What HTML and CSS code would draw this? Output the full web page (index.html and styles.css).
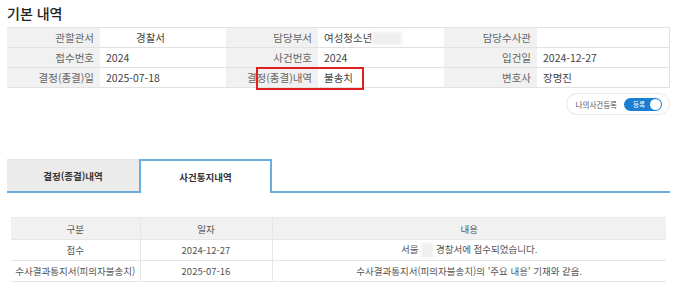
FILE: index.html
```html
<!DOCTYPE html>
<html lang="ko">
<head>
    <meta charset="UTF-8">
    <title>기본 내역</title>
    <link rel="stylesheet" href="styles.css">
</head>
<body>
    <div class="page">
        <h2 class="title">기본 내역</h2>
        <div class="infoWrap">
            <table class="info">
                <colgroup>
                    <col style="width:93px"><col style="width:126px">
                    <col style="width:92px"><col style="width:126px">
                    <col style="width:93px"><col>
                </colgroup>
                <tr>
                    <th>관할관서</th><td><span class="gap w36"></span>경찰서</td>
                    <th>담당부서</th><td>여성청소년<span class="blur w30"></span></td>
                    <th>담당수사관</th><td></td>
                </tr>
                <tr>
                    <th>접수번호</th><td>2024</td>
                    <th>사건번호</th><td>2024</td>
                    <th>입건일</th><td>2024-12-27</td>
                </tr>
                <tr>
                    <th>결정(종결)일</th><td>2025-07-18</td>
                    <th>결정(종결)내역</th><td>불송치</td>
                    <th>변호사</th><td>장명진</td>
                </tr>
            </table>
            <div class="redBox"></div>
        </div>
        <div class="toggleRow">
            <div class="togglePill">
                <span class="toggleLabel">나의사건등록</span>
                <span class="switch"><span class="switchText">등록</span><span class="knob"></span></span>
            </div>
        </div>
        <div class="tabs">
            <div class="tab">결정(종결)내역</div>
            <div class="tab active">사건통지내역</div>
            <div class="tabRest"></div>
        </div>
        <table class="notice">
            <colgroup>
                <col style="width:129px"><col style="width:132px"><col>
            </colgroup>
            <tr><th>구분</th><th>일자</th><th>내용</th></tr>
            <tr><td>접수</td><td>2024-12-27</td><td>서울 <span class="blur w12"></span> 경찰서에 접수되었습니다.</td></tr>
            <tr><td>수사결과통지서(피의자불송치)</td><td>2025-07-16</td><td>수사결과통지서(피의자불송치)의 '주요 내용' 기재와 같음.</td></tr>
        </table>
    </div>
</body>
</html>
```

FILE: styles.css
```css
body {
    margin: 0;
    background: #fff;
    color: #333;
    font-family: "Noto Sans CJK KR", "Noto Sans", sans-serif;
}
.page {
    padding: 0 6px 0 7px;
}
.title {
    margin: 0;
    padding-top: 4px;
    height: 23px;
    font-size: 14px;
    font-weight: 500;
    color: #222;
    line-height: 18px;
}
.infoWrap {
    position: relative;
}
.info {
    width: 663px;
    border-collapse: collapse;
    table-layout: fixed;
    font-size: 10.5px;
    border-top: 1px solid #e2e2e2;
}
.info th, .info td {
    height: 19px;
    padding: 0 6px;
    border-bottom: 1px solid #e2e2e2;
    white-space: nowrap;
    overflow: hidden;
}
.info th {
    background: #f1f1f1;
    font-weight: 400;
    color: #666;
    text-align: right;
}
.info td {
    color: #444;
    text-align: left;
}
.info td:last-child {
    border-right: 1px solid #e2e2e2;
}
.gap {
    display: inline-block;
}
.blur {
    display: inline-block;
    height: 13px;
    vertical-align: middle;
    background: #efefef;
    filter: blur(1.5px);
}
.w36 { width: 30px; }
.w30 { width: 30px; }
.w12 { width: 12px; height: 15px; }
.redBox {
    position: absolute;
    left: 249px;
    top: 40px;
    width: 104px;
    height: 19px;
    border: 2px solid #e02020;
}
.toggleRow {
    display: flex;
    justify-content: flex-end;
    padding-top: 5px;
    width: 663px;
}
.togglePill {
    display: flex;
    align-items: center;
    gap: 7px;
    height: 20px;
    padding: 0 7px 0 9px;
    border: 1px solid #e8e8e8;
    border-radius: 11px;
}
.toggleLabel {
    font-size: 7.5px;
    color: #555;
}
.switch {
    position: relative;
    display: flex;
    align-items: center;
    width: 38px;
    height: 13px;
    border-radius: 7px;
    background: #1a7fd2;
}
.switchText {
    font-size: 6.5px;
    color: #fff;
    padding-left: 9px;
}
.knob {
    position: absolute;
    right: 1px;
    top: 1px;
    width: 11px;
    height: 11px;
    border-radius: 50%;
    background: #fff;
}
.tabs {
    display: flex;
    width: 663px;
    margin-top: 44px;
    height: 34px;
}
.tab {
    width: 132px;
    display: flex;
    align-items: center;
    justify-content: center;
    font-size: 9.5px;
    font-weight: 700;
    color: #333;
    background: #ebebeb;
    border-bottom: 2px solid #6aaee0;
    border-top: 1px solid #e6e6e6;
    box-sizing: border-box;
}
.tab.active {
    width: 133px;
    background: #fff;
    border: 2px solid #6aaee0;
    border-bottom: none;
}
.tabRest {
    flex: 1;
    border-bottom: 2px solid #6aaee0;
}
.notice {
    width: 655px;
    margin: 24px 0 0 4px;
    border-collapse: collapse;
    table-layout: fixed;
    font-size: 9.5px;
    color: #555;
    text-align: center;
}
.notice th, .notice td {
    height: 20px;
    padding: 0 4px;
    border-bottom: 1px solid #e6e6e6;
    white-space: nowrap;
}
.notice th {
    background: #f1f1f1;
    font-weight: 400;
    height: 21px;
    border-top: 1px solid #e8e8e8;
}
.notice th + th, .notice td + td {
    border-left: 1px solid #e6e6e6;
}
```
